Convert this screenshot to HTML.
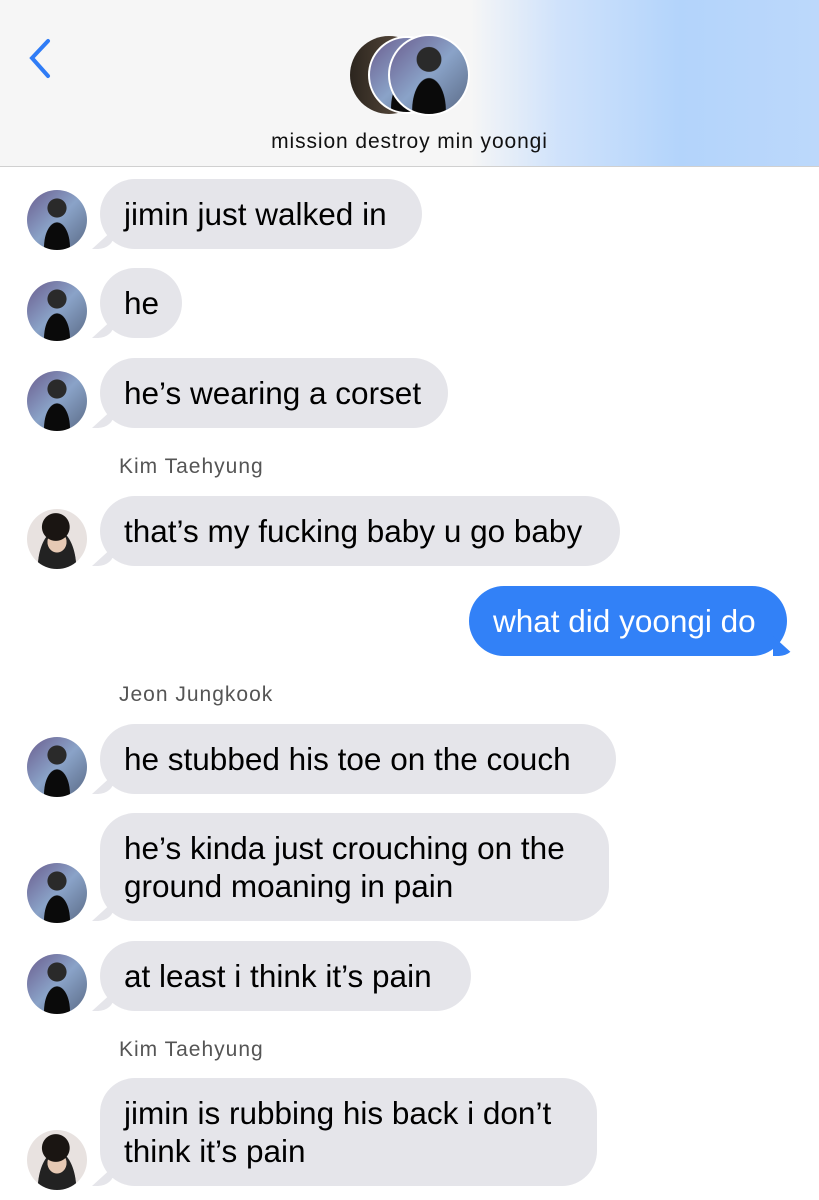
<!DOCTYPE html>
<html><head><meta charset="utf-8"><style>
*{margin:0;padding:0;box-sizing:border-box}
body{width:819px;height:1200px;background:#fff;font-family:"Liberation Sans",sans-serif;position:relative;overflow:hidden}
.hdr{position:absolute;left:0;top:0;width:819px;height:167px;background:linear-gradient(90deg,#f6f6f6 0,#f6f6f6 470px,#cfe2fb 560px,#b3d4fb 680px,#bcd8fb 819px);border-bottom:1px solid #d0d0d0}
.title{position:absolute;top:130px;left:0;width:819px;text-align:center;font-size:21px;letter-spacing:0.9px;color:#111;padding-left:0}
.av{position:absolute;border-radius:50%;overflow:hidden}
.a1{background:radial-gradient(circle at 50% 30%,#2a2a2a 0 18%,transparent 19%),radial-gradient(ellipse at 50% 95%,#0a0a0a 0 30%,transparent 31%),linear-gradient(135deg,#6a5c8e,#8aa3c8 50%,#5a6a86)}
.a2{background:radial-gradient(circle at 48% 30%,#1a1512 0 26%,transparent 27%),radial-gradient(ellipse at 50% 55%,#e6c9b4 0 22%,transparent 23%),radial-gradient(ellipse at 50% 100%,#222 0 45%,transparent 46%),#e8e2e0}
.b{position:absolute;left:100px;background:#e5e5ea;border-radius:35px;font-size:31.5px;color:#000;padding:0 24px;line-height:38px;display:flex;align-items:center;white-space:nowrap}
.b:before{content:"";position:absolute;left:-8px;bottom:0;width:22px;height:20px;background:#e5e5ea;border-bottom-right-radius:16px 14px;clip-path:polygon(0 100%,100% 0,100% 100%)}
.me{left:auto;right:32px;background:#3281f7;color:#fff}
.me:before{left:auto;right:-8px;background:#3281f7;clip-path:polygon(100% 100%,0 0,0 100%)}
.n{position:absolute;left:119px;font-size:21px;letter-spacing:1px;color:#555}
</style></head><body>
<div class="hdr"></div>
<svg style="position:absolute;left:24px;top:38px" width="32" height="42"><path d="M24 3 L8 20 L24 38" stroke="#2f7cf6" stroke-width="4" fill="none" stroke-linecap="round"/></svg>
<div class="av" style="left:350px;top:36px;width:78px;height:78px;background:linear-gradient(90deg,#2c251e,#6b5a4a)"></div>
<div class="av a1" style="left:368px;top:36px;width:78px;height:78px;border:2px solid #fff"></div>
<div class="av a1" style="left:388px;top:34px;width:82px;height:82px;border:2px solid #fff"></div>
<div class="title">mission destroy min yoongi</div>

<div class="av a1" style="left:27px;top:190px;width:60px;height:60px"></div>
<div class="b" style="top:179px;width:322px;height:70px">jimin just walked in</div>
<div class="av a1" style="left:27px;top:281px;width:60px;height:60px"></div>
<div class="b" style="top:268px;width:82px;height:70px">he</div>
<div class="av a1" style="left:27px;top:371px;width:60px;height:60px"></div>
<div class="b" style="top:358px;width:348px;height:70px">he’s wearing a corset</div>
<div class="n" style="top:455px">Kim Taehyung</div>
<div class="av a2" style="left:27px;top:509px;width:60px;height:60px"></div>
<div class="b" style="top:496px;width:520px;height:70px">that’s my fucking baby u go baby</div>
<div class="b me" style="top:586px;width:318px;height:70px">what did yoongi do</div>
<div class="n" style="top:683px">Jeon Jungkook</div>
<div class="av a1" style="left:27px;top:737px;width:60px;height:60px"></div>
<div class="b" style="top:724px;width:516px;height:70px">he stubbed his toe on the couch</div>
<div class="av a1" style="left:27px;top:863px;width:60px;height:60px"></div>
<div class="b" style="top:813px;width:509px;height:108px">he’s kinda just crouching on the<br>ground moaning in pain</div>
<div class="av a1" style="left:27px;top:954px;width:60px;height:60px"></div>
<div class="b" style="top:941px;width:371px;height:70px">at least i think it’s pain</div>
<div class="n" style="top:1038px">Kim Taehyung</div>
<div class="av a2" style="left:27px;top:1130px;width:60px;height:60px"></div>
<div class="b" style="top:1078px;width:497px;height:108px">jimin is rubbing his back i don’t<br>think it’s pain</div>
</body></html>
